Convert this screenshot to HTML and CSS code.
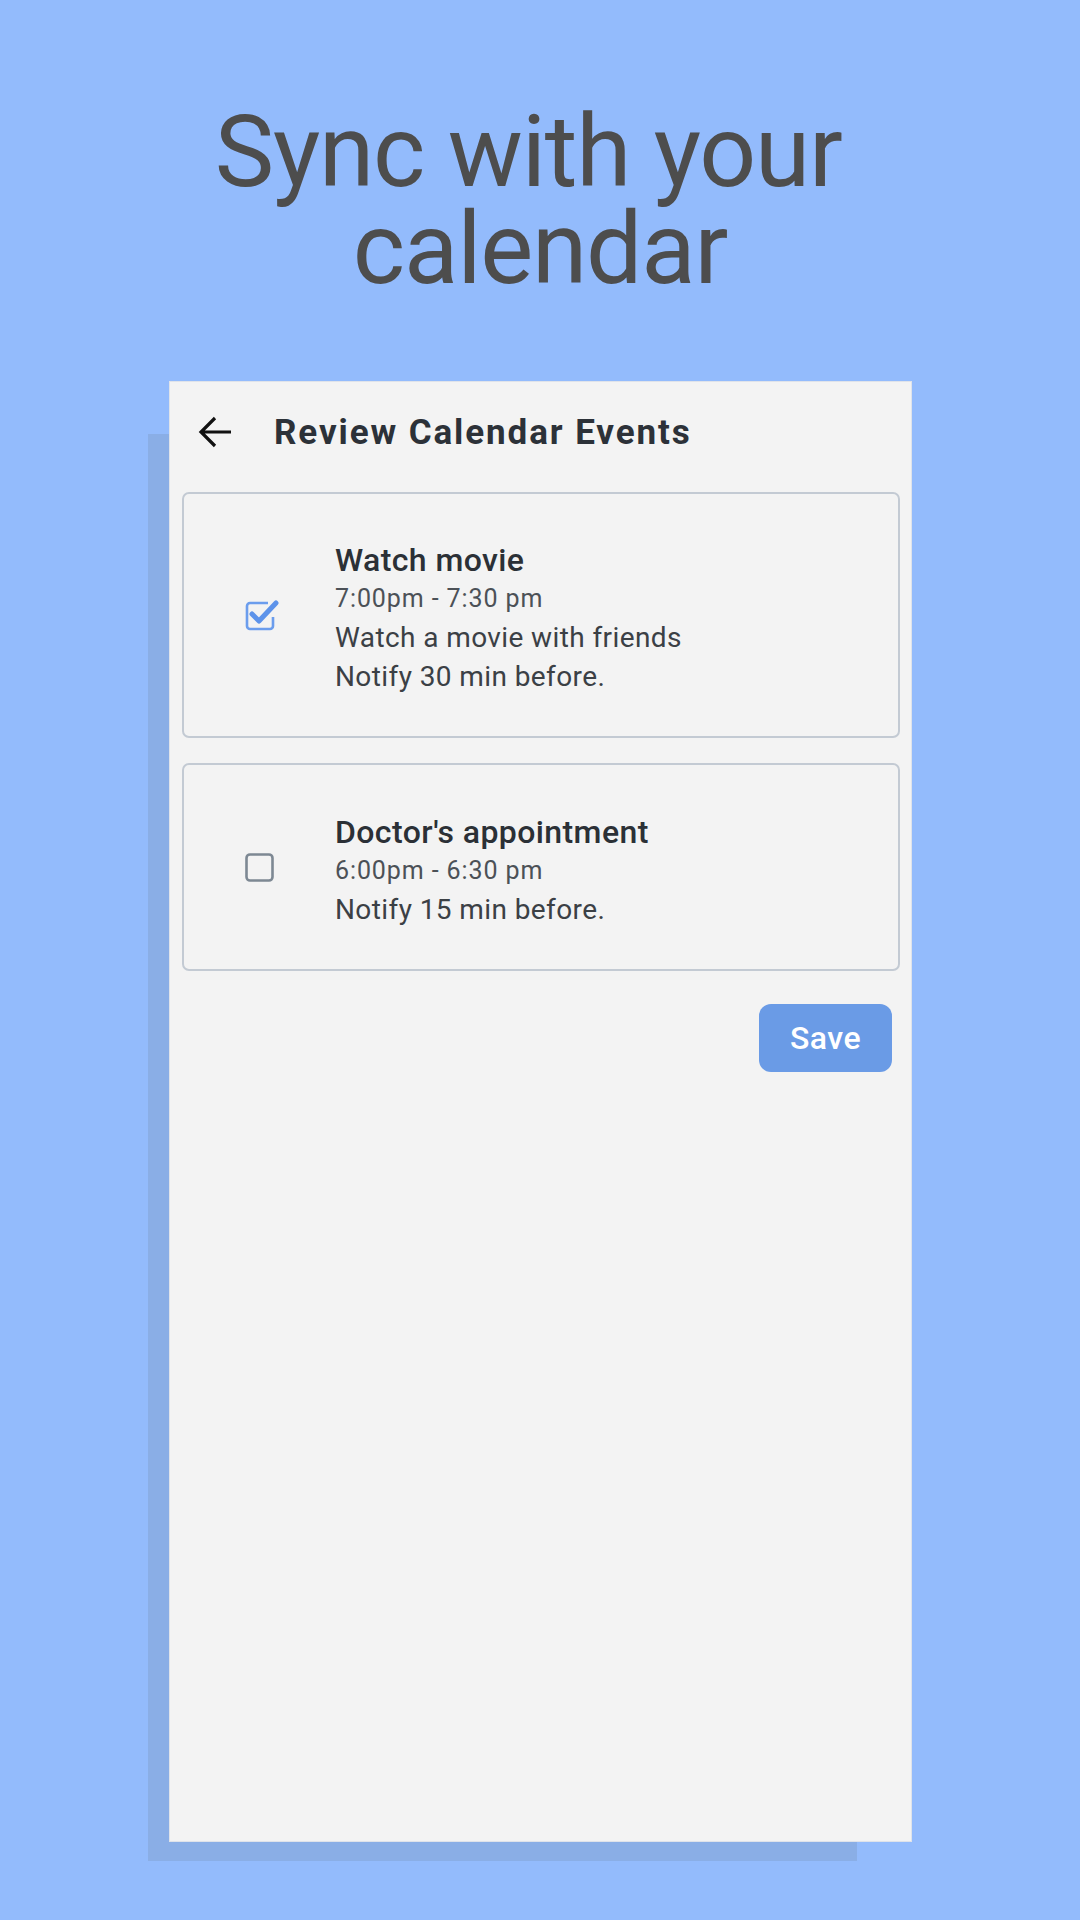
FILE: index.html
```html
<!DOCTYPE html>
<html>
<head>
<meta charset="utf-8">
<link rel="stylesheet" href="styles.css">
</head>
<body>
<h1 class="headline">Sync with your&nbsp;<br>calendar</h1>
<div class="phone">
  <div class="appbar">
    <svg class="back" viewBox="0 0 36 36" width="36" height="36"><path d="M33 18H5M17 4L3 18l14 14" fill="none" stroke="#111" stroke-width="3.2" stroke-linecap="butt" stroke-linejoin="miter"/></svg>
    <div class="appbar-title">Review Calendar Events</div>
  </div>
  <div class="list">
    <div class="card card-tall">
      <svg class="cb" viewBox="0 0 36 32" width="36" height="32"><path d="M24 3H6a3 3 0 0 0-3 3v20a3 3 0 0 0 3 3h20a3 3 0 0 0 3-3v-9" fill="none" stroke="#6b9ded" stroke-width="2.6"/><path d="M8 14l7 7L32 3" fill="none" stroke="#5d93ea" stroke-width="5" stroke-linejoin="round" stroke-linecap="round"/></svg>
      <div class="info">
        <div class="ev-title">Watch movie</div>
        <div class="ev-time">7:00pm - 7:30 pm</div>
        <div class="ev-text">Watch a movie with friends</div>
        <div class="ev-text">Notify 30 min before.</div>
      </div>
    </div>
    <div class="card card-short">
      <svg class="cb" viewBox="0 0 36 32" width="36" height="32"><rect x="2.5" y="2.5" width="26" height="26" rx="3.5" fill="none" stroke="#7d8893" stroke-width="2.6"/></svg>
      <div class="info">
        <div class="ev-title">Doctor's appointment</div>
        <div class="ev-time">6:00pm - 6:30 pm</div>
        <div class="ev-text">Notify 15 min before.</div>
      </div>
    </div>
    <div class="actions">
      <button class="save">Save</button>
    </div>
  </div>
</div>
</body>
</html>
```
FILE: styles.css
```css
html, body {
  margin: 0;
  padding: 0;
}
body {
  width: 1080px;
  height: 1920px;
  background: #93bbfc;
  font-family: Roboto, "Noto Sans", sans-serif;
  overflow: hidden;
}
.headline {
  margin: 103px 0 0 0;
  font-family: Roboto, sans-serif;
  font-weight: 400;
  font-size: 100px;
  line-height: 97px;
  color: #4d4d4d;
  text-align: center;
  letter-spacing: -1.2px;
}
.phone {
  margin: 84px 0 0 169px;
  width: 743px;
  height: 1461px;
  background: #f3f3f3;
  box-shadow: -38px 36px 0 -17px #8aaee6;
  box-sizing: border-box;
  border: 1px solid #dfe3ea;
}
.appbar {
  height: 98px;
  display: flex;
  align-items: center;
  padding-left: 28px;
}
.back {
  display: block;
  margin-top: 1px;
}
.appbar-title {
  margin-left: 40px;
  font-size: 35px;
  font-weight: 700;
  letter-spacing: 1.9px;
  color: #2c3138;
  margin-top: 2px;
}
.list {
  padding: 12px 11px 0 12px;
  display: flex;
  flex-direction: column;
  gap: 25px;
}
.card {
  border: 2px solid #c3cad3;
  border-radius: 7px;
  display: flex;
  align-items: center;
  padding-left: 60px;
  box-sizing: border-box;
}
.card-tall { height: 246px; }
.card-short { height: 208px; }
.cb {
  display: block;
  flex: none;
  margin-top: 1px;
}
.info {
  margin-left: 55px;
  margin-top: 6px;
  display: flex;
  flex-direction: column;
}
.ev-title {
  font-size: 32px;
  font-weight: 500;
  letter-spacing: 0.4px;
  color: #2b3036;
  line-height: 40px;
}
.ev-time {
  font-size: 25px;
  letter-spacing: 0.9px;
  color: #4c5157;
  line-height: 38px;
}
.ev-text {
  font-size: 28px;
  letter-spacing: 0.4px;
  color: #3b4045;
  line-height: 39px;
}
.actions {
  display: flex;
  justify-content: flex-end;
  margin-top: 8px;
  padding-right: 8px;
}
.save {
  width: 133px;
  height: 68px;
  border: none;
  border-radius: 12px;
  background: #6a9be6;
  color: #ffffff;
  font-family: Roboto, sans-serif;
  font-size: 32px;
  font-weight: 500;
  letter-spacing: 0.5px;
  padding: 0;
}
```
